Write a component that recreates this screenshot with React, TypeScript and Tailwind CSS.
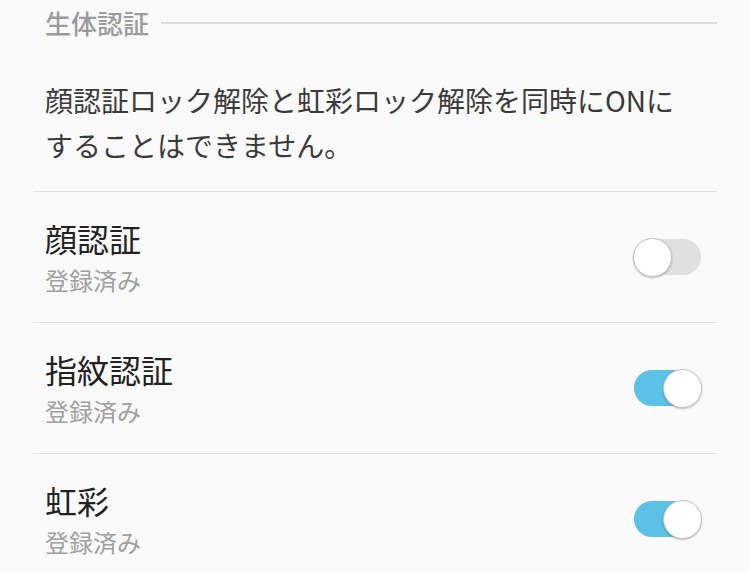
import React from 'react';

type Item = { title: string; sub: string; on: boolean };

const items: Item[] = [
  { title: '顔認証', sub: '登録済み', on: false },
  { title: '指紋認証', sub: '登録済み', on: true },
  { title: '虹彩', sub: '登録済み', on: true },
];

// Android style switch
function Switch({ on }: { on: boolean }) {
  return (
    <div className={`relative w-[67px] h-[36px] rounded-full ${on ? 'bg-[#5bc1e6]' : 'bg-[#e0e0e0]'}`}>
      <div
        className={`absolute top-[-1.5px] w-[39px] h-[39px] rounded-full bg-white border border-[#c4c4c4] shadow-[0_1px_2px_rgba(0,0,0,0.25)] ${
          on ? 'right-[-1px]' : 'left-[-1px]'
        }`}
      />
    </div>
  );
}

export default function App() {
  return (
    <div
      className="w-[750px] h-[572px] bg-[#fafafa] overflow-hidden"
      style={{ fontFamily: '"Noto Sans CJK JP", "Noto Sans", sans-serif' }}
    >
      {/* section header */}
      <div className="flex items-center h-[45px] pl-[45px] pr-[33px]">
        <span className="text-[26px] leading-none font-medium text-[#9b9b9b]">生体認証</span>
        <div className="flex-1 h-[2px] bg-[#dedede] ml-[12px]" />
      </div>

      <div className="px-[45px] pt-[33px] pb-[23px] text-[28px] leading-[45px] text-[#3a3a3a]">
        <p>顔認証ロック解除と虹彩ロック解除を同時にONに</p>
        <p>することはできません。</p>
      </div>

      {items.map((item) => (
        <div key={item.title}>
          <div className="mx-[33px] h-px bg-[#e2e2e2]" />
          <div className="flex items-center justify-between h-[130px] pl-[45px] pr-[49px]">
            <div className="flex flex-col mt-[2px]">
              <span className="text-[32px] leading-[44px] text-[#222]">{item.title}</span>
              <span className="text-[24px] leading-[40px] text-[#a0a0a0]">{item.sub}</span>
            </div>
            <Switch on={item.on} />
          </div>
        </div>
      ))}
    </div>
  );
}
